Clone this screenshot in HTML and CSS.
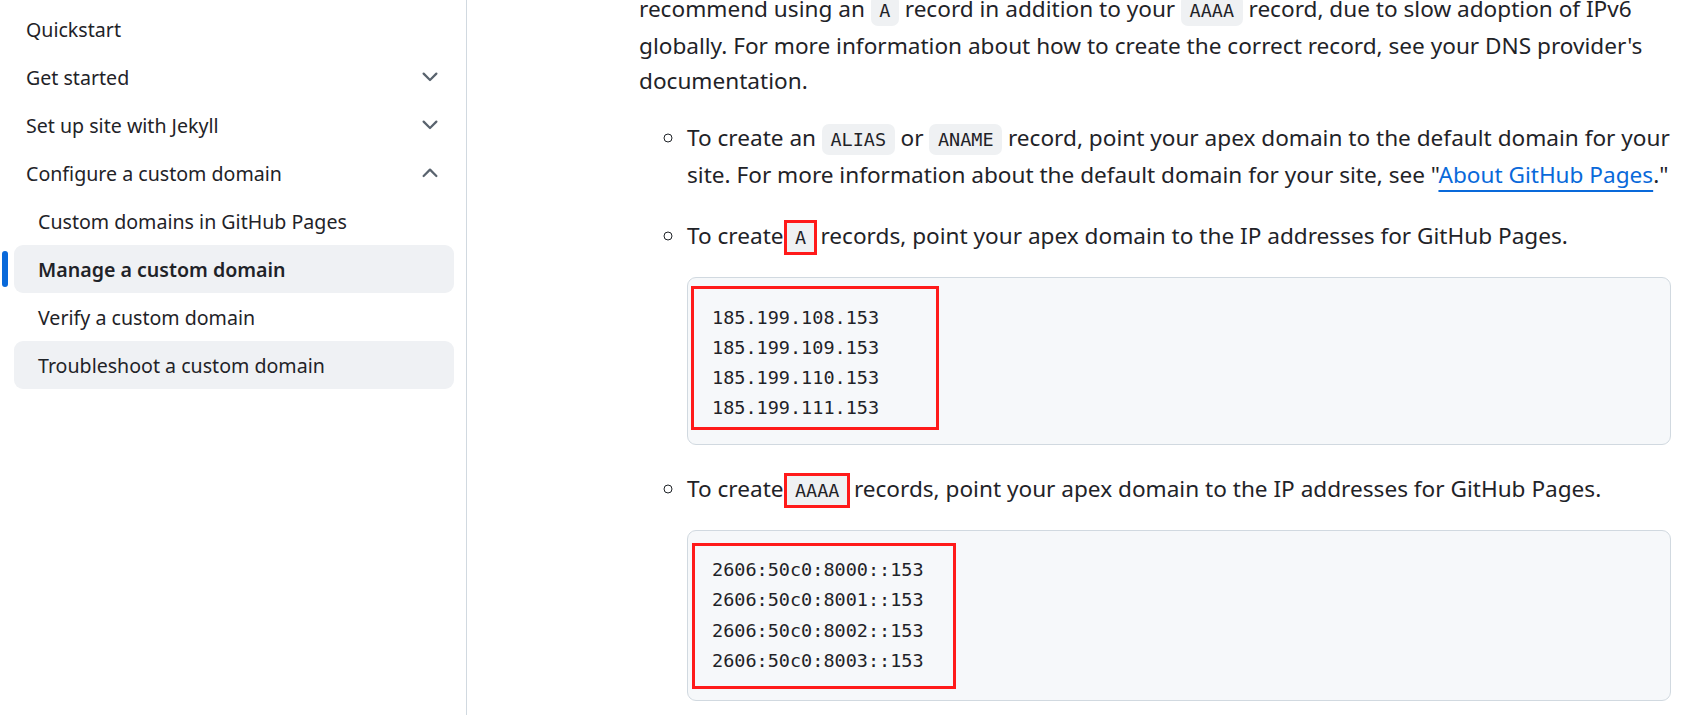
FILE: index.html
```html
<!DOCTYPE html>
<html lang="en">
<head>
<meta charset="utf-8">
<title>Managing a custom domain for your GitHub Pages site</title>
<link rel="stylesheet" href="styles.css">
</head>
<body>
<div class="layout">
  <nav class="sidebar">
    <ul class="nav">
      <li><a class="nav-item">Quickstart</a></li>
      <li><a class="nav-item">Get started
        <svg class="chev" viewBox="0 0 16 16" width="24" height="24"><path d="M12.78 5.22a.749.749 0 0 1 0 1.06l-4.25 4.25a.749.749 0 0 1-1.060 0L3.22 6.28a.749.749 0 1 1 1.06-1.06L8 8.939l3.72-3.719a.749.749 0 0 1 1.06 0Z"/></svg></a></li>
      <li><a class="nav-item">Set up site with Jekyll
        <svg class="chev" viewBox="0 0 16 16" width="24" height="24"><path d="M12.78 5.22a.749.749 0 0 1 0 1.06l-4.25 4.25a.749.749 0 0 1-1.06 0L3.22 6.28a.749.749 0 1 1 1.06-1.06L8 8.939l3.72-3.719a.749.749 0 0 1 1.06 0Z"/></svg></a></li>
      <li><a class="nav-item">Configure a custom domain
        <svg class="chev" viewBox="0 0 16 16" width="24" height="24"><path d="M3.22 10.53a.749.749 0 0 1 0-1.06l4.25-4.25a.749.749 0 0 1 1.06 0l4.25 4.25a.749.749 0 0 1-1.06 1.06L8 6.811 4.28 10.53a.749.749 0 0 1-1.06 0Z"/></svg></a>
        <ul class="subnav">
          <li><a class="nav-item sub">Custom domains in GitHub Pages</a></li>
          <li><a class="nav-item sub active">Manage a custom domain</a></li>
          <li><a class="nav-item sub">Verify a custom domain</a></li>
          <li><a class="nav-item sub hover">Troubleshoot a custom domain</a></li>
        </ul>
      </li>
    </ul>
  </nav>
  <main class="content">
    <article class="article">
      <p class="cut">recommend using an <code>A</code> record in addition to your <code>AAAA</code> record, due to slow adoption of IPv6 globally. For more information about how to create the correct record, see your DNS provider's documentation.</p>
      <ul class="records">
        <li>
          <p>To create an <code>ALIAS</code> or <code>ANAME</code> record, point your apex domain to the default domain for your site. For more information about the default domain for your site, see "<a class="link">About GitHub Pages</a>."</p>
        </li>
        <li>
          <p>To create <code class="marked">A</code> records, point your apex domain to the IP addresses for GitHub Pages.</p>
          <pre class="block"><span class="mark v4"><code>185.199.108.153
185.199.109.153
185.199.110.153
185.199.111.153</code></span></pre>
        </li>
        <li>
          <p>To create <code class="marked">AAAA</code> records, point your apex domain to the IP addresses for GitHub Pages.</p>
          <pre class="block block-v6"><span class="mark v6"><code>2606:50c0:8000::153
2606:50c0:8001::153
2606:50c0:8002::153
2606:50c0:8003::153</code></span></pre>
        </li>
      </ul>
    </article>
  </main>
</div>
</body>
</html>
```
FILE: styles.css
```css
* { box-sizing: border-box; }

html, body {
  margin: 0;
  height: 100%;
  background: #ffffff;
  overflow: hidden;
}

body {
  font-family: "Noto Sans", "Open Sans", sans-serif;
  color: #1f2328;
}

.layout {
  display: flex;
  height: 715px;
}

/* ---------- sidebar ---------- */
.sidebar {
  width: 467px;
  flex: 0 0 467px;
  border-right: 1px solid #d1d9e0;
  padding: 5px 12px 0 14px;
}

.nav, .subnav {
  list-style: none;
  margin: 0;
  padding: 0;
}

.nav-item {
  position: relative;
  display: flex;
  align-items: center;
  justify-content: space-between;
  height: 48px;
  padding: 0 12px 0 12px;
  border-radius: 9px;
  font-size: 19.6px;
  color: #1f2328;
  text-decoration: none;
}

.nav-item.sub {
  padding-left: 24px;
}

.nav-item.active {
  background: #eff1f4;
  font-weight: 600;
  font-size: 19.6px;
}

.nav-item.active::before {
  content: "";
  position: absolute;
  left: -12px;
  top: 6px;
  width: 6px;
  height: 36px;
  border-radius: 6px;
  background: #0969da;
}

.nav-item.hover {
  background: #eff1f4;
}

.chev {
  fill: #59636e;
  flex: 0 0 auto;
}

/* ---------- content ---------- */
.content {
  flex: 1 1 auto;
  padding: 0 17px 0 172px;
}

.article {
  font-size: 22.6px;
  line-height: 35px;
}

.article p {
  margin: 0;
}

.article .cut {
  margin-top: -9px;
}

.records p {
  margin-right: -8px;
}

code {
  font-family: "DejaVu Sans Mono", "Liberation Mono", monospace;
  font-size: 18.5px;
}

p code {
  background: #eff1f3;
  border-radius: 7px;
  padding: 5px 8.5px;
}

code.marked {
  border-radius: 0;
  margin-left: -3px;
  outline: 3px solid #ff1a1a;
  outline-offset: -1px;
}

.link {
  color: #0969da;
  text-decoration: underline;
  text-decoration-thickness: 2px;
  text-underline-offset: 7px;
}

.records {
  list-style: circle;
  margin: 22px 0 0 0;
  padding-left: 48px;
}

.records li + li {
  margin-top: 26px;
}

.block {
  margin: 22px 0 0 0;
  background: #f6f8fa;
  border: 1px solid #d1d9e0;
  border-radius: 9px;
  padding: 8px 0 14px 3px;
  line-height: 29.1px;
}

.block.block-v6 {
  padding: 12px 0 11px 4px;
}

.mark {
  display: inline-block;
  border: 3px solid #ff1a1a;
  padding: 13px 0 5px 18px;
  vertical-align: top;
}

.mark code {
  color: #1f2328;
}

.mark.v4 { width: 248px; }
.mark.v6 {
  width: 264px;
  padding: 8px 0 11px 17px;
}
```
